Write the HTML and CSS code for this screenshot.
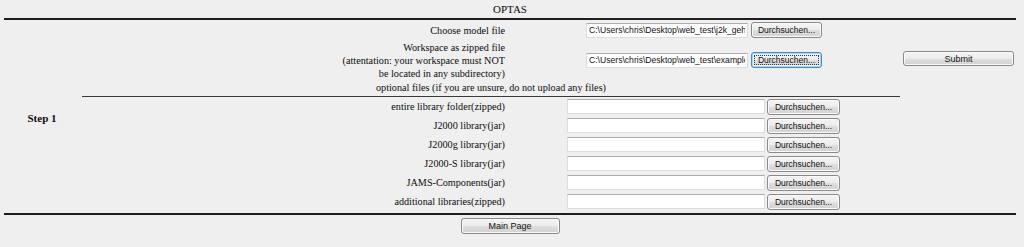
FILE: index.html
```html
<!DOCTYPE html>
<html lang="en">
<head>
    <meta charset="UTF-8">
    <title>OPTAS</title>
    <link rel="stylesheet" href="styles.css">
</head>
<body>

<div class="page">
    <div class="title">OPTAS</div>
    <div class="rule"></div>

    <div class="step">
        <div class="step-name">Step 1</div>

        <div class="required">
            <div class="row">
                <label class="label">Choose model file</label>
                <input class="file" type="text" value="C:\Users\chris\Desktop\web_test\j2k_gehlberg.jar" readonly>
                <button class="browse" type="button">Durchsuchen...</button>
            </div>
            <div class="row tall">
                <label class="label">Workspace as zipped file<br>(attentation: your workspace must NOT<br>be located in any subdirectory)</label>
                <input class="file" type="text" value="C:\Users\chris\Desktop\web_test\example.zip" readonly>
                <button class="browse focused" type="button">Durchsuchen...</button>
            </div>
        </div>

        <div class="submit-cell">
            <button class="submit" type="button">Submit</button>
        </div>

        <div class="optional-head">optional files (if you are unsure, do not upload any files)</div>
        <div class="thin-rule"></div>

        <div class="optional">
            <div class="row">
                <label class="label">entire library folder(zipped)</label>
                <input class="file" type="text">
                <button class="browse" type="button">Durchsuchen...</button>
            </div>
            <div class="row">
                <label class="label">J2000 library(jar)</label>
                <input class="file" type="text">
                <button class="browse" type="button">Durchsuchen...</button>
            </div>
            <div class="row">
                <label class="label">J2000g library(jar)</label>
                <input class="file" type="text">
                <button class="browse" type="button">Durchsuchen...</button>
            </div>
            <div class="row">
                <label class="label">J2000-S library(jar)</label>
                <input class="file" type="text">
                <button class="browse" type="button">Durchsuchen...</button>
            </div>
            <div class="row">
                <label class="label">JAMS-Components(jar)</label>
                <input class="file" type="text">
                <button class="browse" type="button">Durchsuchen...</button>
            </div>
            <div class="row">
                <label class="label">additional libraries(zipped)</label>
                <input class="file" type="text">
                <button class="browse" type="button">Durchsuchen...</button>
            </div>
        </div>
    </div>

    <div class="rule bottom"></div>

    <div class="footer">
        <button class="main-page" type="button">Main Page</button>
    </div>
</div>

</body>
</html>
```

FILE: styles.css
```css
* {
    box-sizing: border-box;
}

body {
    margin: 0;
    background-color: #efefef;
    color: #0c0c0c;
    font-family: 'Liberation Serif', 'Times New Roman', serif;
    font-size: 10.2px;
}

.page {
    width: 1012px;
    margin-left: 4px;
}

.title {
    height: 18px;
    line-height: 18px;
    text-align: center;
    font-size: 11px;
}

.rule {
    height: 2px;
    background-color: #1e1e1e;
}

.rule.bottom {
    margin-top: 1px;
}

.step {
    display: grid;
    grid-template-columns: 78px 818px 116px;
    grid-template-rows: auto 16px 1px auto;
}

.step-name {
    grid-column: 1;
    grid-row: 1 / -1;
    align-self: center;
    text-align: center;
    font-weight: bold;
    font-size: 11px;
    padding: 3px 2px 0 0;
}

.required {
    grid-column: 2;
    grid-row: 1;
}

.submit-cell {
    grid-column: 3;
    grid-row: 1;
    align-self: end;
    padding: 0 0 14px 3px;
}

.optional-head {
    grid-column: 2;
    grid-row: 2;
    text-align: center;
    line-height: 16px;
}

.thin-rule {
    grid-column: 2;
    grid-row: 3;
    background-color: #3a3a3a;
}

.optional {
    grid-column: 2;
    grid-row: 4;
    padding-bottom: 1px;
}

.row {
    display: grid;
    align-items: center;
}

.required .row {
    grid-template-columns: 501px 162px 71px;
    column-gap: 3px;
    height: 20px;
}

.required .row.tall {
    height: 40px;
}

.optional .row {
    grid-template-columns: 483px 198px 73px;
    column-gap: 2px;
    height: 19px;
}

.label {
    text-align: right;
    line-height: 13px;
}

.required .label {
    padding-right: 78px;
}

.optional .label {
    padding-right: 60px;
}

.file {
    height: 15px;
    margin: 0;
    padding: 0 2px;
    border: 1px solid #dadde2;
    border-top-color: #abadb3;
    background: #fff;
    font-family: 'Liberation Sans', Arial, sans-serif;
    font-size: 8.6px;
    color: #111;
    outline: none;
}

.browse,
.submit,
.main-page {
    margin: 0;
    padding: 0;
    height: 16px;
    border: 1px solid #8a8a8a;
    border-radius: 3px;
    background: linear-gradient(#f4f4f4 0%, #ececec 50%, #dedede 51%, #d2d2d2 100%);
    box-shadow: inset 0 0 0 1px #fbfbfb;
    font-family: 'Liberation Sans', Arial, sans-serif;
    font-size: 8.5px;
    color: #111;
    cursor: pointer;
}

.browse.focused {
    border-color: #3c8dc9;
    box-shadow: inset 0 0 0 1px #a6d8f5, inset 0 0 0 2px #f4f4f4;
    outline: 1px dotted #333;
    outline-offset: -4px;
}

.submit {
    width: 111px;
    height: 15px;
    font-size: 9px;
}

.footer {
    display: flex;
    justify-content: center;
    padding-top: 3px;
}

.main-page {
    width: 99px;
    font-size: 9px;
}
```
